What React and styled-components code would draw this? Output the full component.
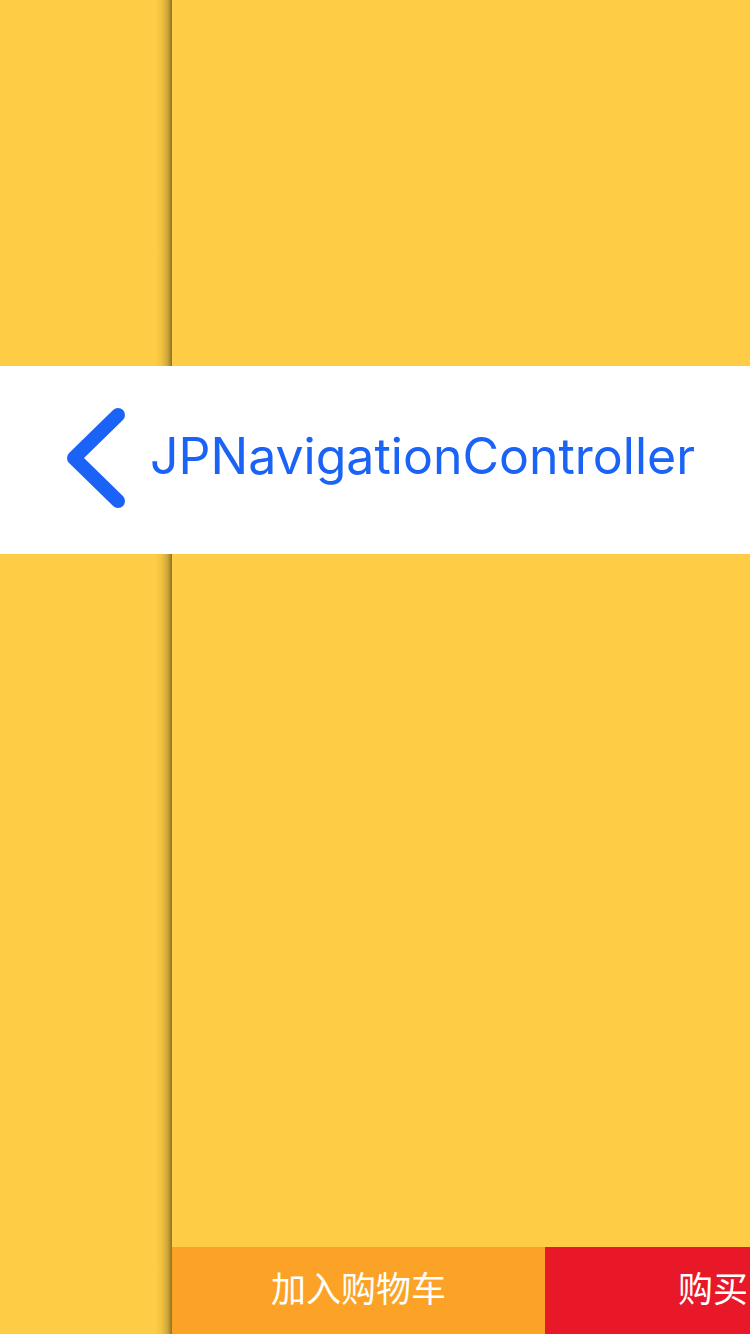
import React from 'react'
import styled, { createGlobalStyle } from 'styled-components'

const Global = createGlobalStyle`
  html, body {
    margin: 0;
    padding: 0;
    background: #ffcd45;
  }
  * { box-sizing: border-box; }
`

const Page = styled.div`
  width: 750px;
  height: 1334px;
  overflow: hidden;
  display: flex;
  flex-direction: column;
  background: #ffcd45;
  font-family: Inter, "Noto Sans", "Noto Sans CJK SC", sans-serif;
`

const Stage = styled.div`
  display: flex;
  height: ${p => p.h}px;
  flex-shrink: 0;
`

const Backdrop = styled.div`
  width: 155px;
  flex-shrink: 0;
  background: #ffcd45;
`

const Shadow = styled.div`
  width: 17px;
  flex-shrink: 0;
  background: linear-gradient(
    to right,
    rgba(0, 0, 0, 0) 0%,
    rgba(0, 0, 0, 0.06) 40%,
    rgba(0, 0, 0, 0.2) 75%,
    rgba(0, 0, 0, 0.45) 100%
  );
`

const Panel = styled.div`
  flex: 1;
  display: flex;
  flex-direction: column;
  justify-content: flex-end;
  background: #ffcd45;
  min-width: 0;
`

const NavBar = styled.div`
  height: 188px;
  flex-shrink: 0;
  background: #fff;
  display: flex;
  align-items: center;
  padding-left: 60px;
  gap: 20px;
`

const Title = styled.span`
  color: #1b63f7;
  font-size: 50px;
  font-weight: 400;
  letter-spacing: 0;
  margin-top: -8px;
`

const BottomBar = styled.div`
  height: 87px;
  display: flex;
`

const Action = styled.div`
  width: ${p => p.w};
  flex: ${p => (p.w ? 'none' : 1)};
  background: ${p => p.bg};
  color: #fff;
  font-family: "Noto Sans CJK SC", sans-serif;
  font-size: 35px;
  display: flex;
  align-items: center;
  justify-content: ${p => (p.start ? 'flex-start' : 'center')};
  padding-left: ${p => p.start || 0}px;
  padding-bottom: 8px;
  white-space: nowrap;
  overflow: hidden;
`

const BackIcon = () => (
  <svg width="70" height="110" viewBox="0 0 70 110">
    <path
      d="M58 10 L14 53 L58 96"
      fill="none"
      stroke="#1b63f7"
      strokeWidth="14"
      strokeLinecap="round"
      strokeLinejoin="round"
    />
  </svg>
)

export default function App() {
  return (
    <Page>
      <Global />
      <Stage h={366}>
        <Backdrop />
        <Shadow />
        <Panel />
      </Stage>
      <NavBar>
        <BackIcon />
        <Title>JPNavigationController</Title>
      </NavBar>
      <Stage h={780}>
        <Backdrop />
        <Shadow />
        <Panel>
          <BottomBar>
            <Action w="373px" bg="#fca327">加入购物车</Action>
            <Action bg="#e91828" start={133}>购买</Action>
          </BottomBar>
        </Panel>
      </Stage>
    </Page>
  )
}
